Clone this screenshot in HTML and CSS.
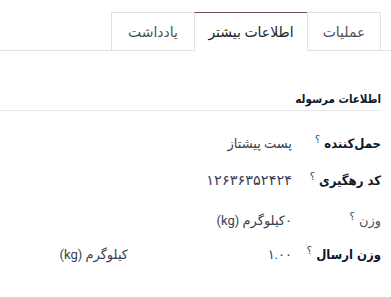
FILE: index.html
```html
<!DOCTYPE html>
<html lang="fa" dir="rtl">
<head>
<meta charset="utf-8">
<link rel="stylesheet" href="styles.css">
</head>
<body>
<div class="page">
  <ul class="tabs">
    <li class="tab t1">عملیات</li>
    <li class="tab t2 active">اطلاعات بیشتر</li>
    <li class="tab t3">یادداشت</li>
  </ul>
  <div class="content">
    <div class="section-title">اطلاعات مرسوله</div>
    <div class="rows">
      <div class="row">
        <div class="label strong">حمل‌کننده<sup class="tip">؟</sup></div>
        <div class="value">پست پیشتاز</div>
      </div>
      <div class="row">
        <div class="label strong">کد رهگیری<sup class="tip">؟</sup></div>
        <div class="value digits">۱۲۶۳۶۳۵۲۴۲۴</div>
      </div>
      <div class="row row-plain">
        <div class="label">وزن<sup class="tip">؟</sup></div>
        <div class="value">۰کیلوگرم (kg)</div>
      </div>
      <div class="row">
        <div class="label strong">وزن ارسال<sup class="tip">؟</sup></div>
        <div class="value split"><span class="num">۱.۰۰</span><span class="unit">کیلوگرم (kg)</span></div>
      </div>
    </div>
  </div>
</div>
</body>
</html>
```
FILE: styles.css
```css
html, body {
  margin: 0;
  padding: 0;
  background: #ffffff;
}
body {
  font-family: Roboto, "DejaVu Sans", sans-serif;
  font-size: 14px;
  color: #212529;
}
.page {
  width: 391px;
  height: 297px;
  padding-top: 12px;
  box-sizing: border-box;
}
.tabs {
  list-style: none;
  margin: 0;
  padding: 0 10px 0 0;
  display: flex;
  border-bottom: 1px solid #dee2e6;
  height: 38px;
}
.tab {
  box-sizing: border-box;
  height: 39px;
  margin-bottom: -1px;
  display: flex;
  align-items: center;
  justify-content: center;
  border-top: 1px solid #dee2e6;
  border-left: 1px solid #dee2e6;
  border-bottom: 1px solid #dee2e6;
  color: #4a5260;
  background: #fff;
  padding-top: 1px;
}
.t1 {
  width: 74px;
  border-right: 1px solid #dee2e6;
}
.t2 {
  width: 113px;
}
.t3 {
  width: 83px;
}
.tab.active {
  color: #212529;
  border-top-color: #714b67;
  border-bottom-color: #ffffff;
}
.content {
  padding: 0 10px 0 0;
}
.section-title {
  margin-top: 38px;
  font-family: "DejaVu Sans Condensed", "DejaVu Sans", sans-serif;
  font-weight: bold;
  font-size: 11.5px;
  height: 20px;
  line-height: 20px;
  border-bottom: 1px solid #e5e7eb;
  padding-bottom: 1px;
  color: #111827;
}
.rows {
  padding-top: 22px;
  display: flex;
  flex-direction: column;
  gap: 17px;
}
.row {
  display: flex;
  height: 20px;
  align-items: center;
}
.row-plain {
  padding-top: 3px;
  margin-bottom: -3px;
}
.label {
  width: 89px;
  flex: none;
  color: #4b5563;
  font-size: 13px;
}
.label.strong {
  font-family: "DejaVu Sans Condensed", "DejaVu Sans", sans-serif;
  font-weight: bold;
  color: #111827;
}
.tip {
  font-family: "DejaVu Sans", sans-serif;
  font-size: 10px;
  font-weight: normal;
  color: #374151;
  margin-right: 4px;
}
.value {
  color: #374151;
  font-size: 13px;
}
.value.digits {
  font-size: 14.5px;
}
.value.split {
  display: flex;
}
.num {
  width: 164px;
  flex: none;
}
</style>
```
